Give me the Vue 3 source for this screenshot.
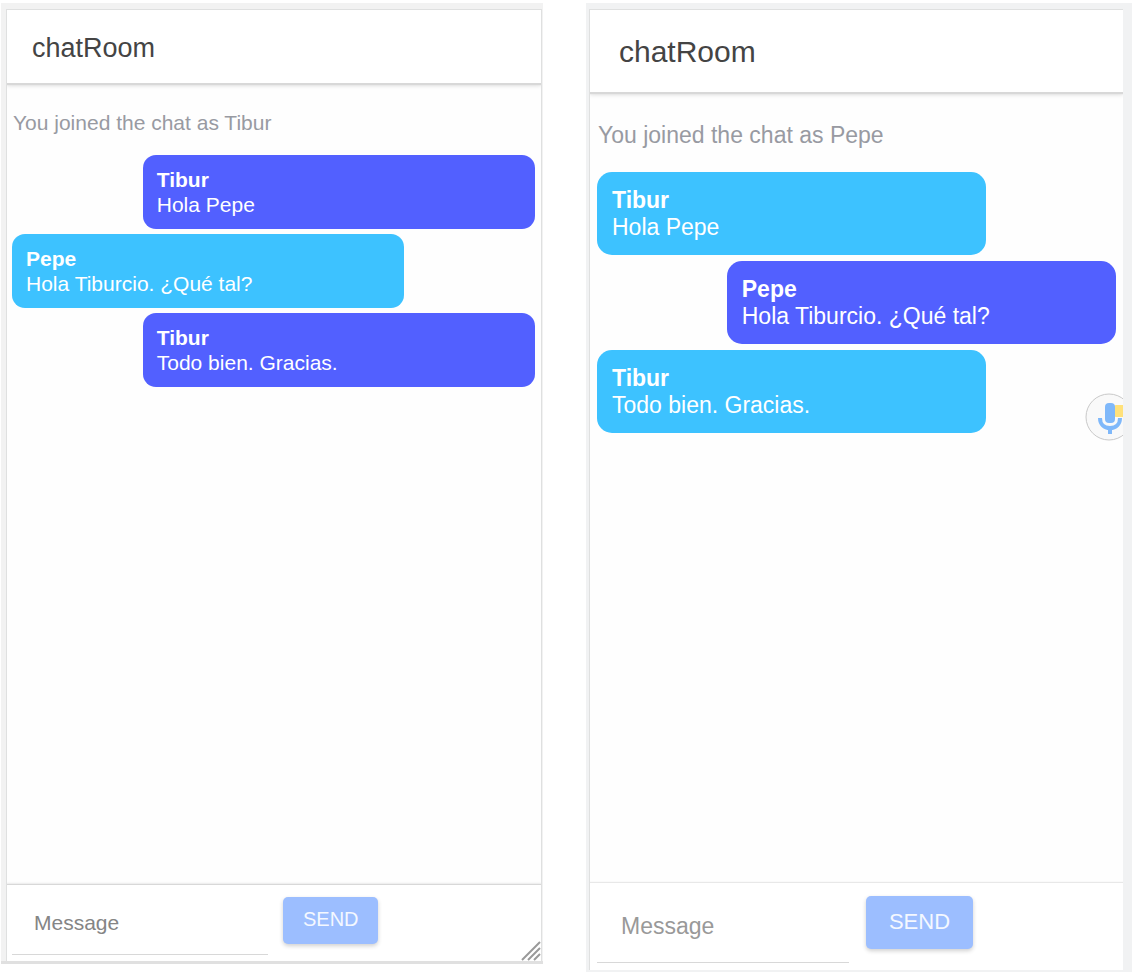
<script setup>
import { ref } from 'vue'

const messages = [
  { from: 'Tibur', text: 'Hola Pepe' },
  { from: 'Pepe', text: 'Hola Tiburcio. ¿Qué tal?' },
  { from: 'Tibur', text: 'Todo bien. Gracias.' },
]

const rooms = [
  { id: 'browser', user: 'Tibur' },
  { id: 'device', user: 'Pepe' },
]

const drafts = ref({ browser: '', device: '' })
</script>

<template>
  <main class="page">
    <section v-for="room in rooms" :key="room.id" class="phone" :class="room.id">
      <div class="screen">
        <header class="bar">
          <h1>chatRoom</h1>
        </header>

        <div class="log">
          <p class="joined">You joined the chat as {{ room.user }}</p>
          <article
            v-for="(message, i) in messages"
            :key="i"
            class="bubble"
            :class="{ mine: message.from === room.user }"
          >
            <strong>{{ message.from }}</strong>
            <span>{{ message.text }}</span>
          </article>
        </div>

        <form class="composer" @submit.prevent>
          <input
            v-model="drafts[room.id]"
            type="text"
            placeholder="Message"
            aria-label="Message"
          />
          <button type="submit" :disabled="!drafts[room.id]">SEND</button>
        </form>

        <svg v-if="room.id === 'browser'" class="grip" viewBox="0 0 20 20" aria-hidden="true">
          <path d="M1 19 19 1M7 19 19 7M13 19 19 13" fill="none" stroke="#9a9a9a" stroke-width="2" />
        </svg>
        <button v-else type="button" class="mic" aria-label="Voice input">
          <svg viewBox="0 0 48 48" aria-hidden="true">
            <circle cx="24" cy="24" r="23" fill="#f9f9f9" stroke="#c9c9c9" stroke-width="1" />
            <rect x="29" y="12" width="14" height="12" rx="2" fill="#ffe17a" />
            <rect x="20" y="10" width="10" height="20" rx="4" fill="#7fb8fa" />
            <path d="M15 25c0 6 4 10 10 10s10-4 10-10M25 35V41" fill="none" stroke="#7fb8fa" stroke-width="4" />
          </svg>
        </button>
      </div>
    </section>
  </main>
</template>

<style>
body {
  margin: 0;
  background: #fff;
}
</style>

<style scoped>
.page {
  box-sizing: border-box;
  min-height: 100vh;
  padding: 3px 7px 7px 1px;
  display: grid;
  grid-template-columns: 542fr 546fr;
  gap: 43px;
  font-family: "Liberation Sans", Arial, sans-serif;
}

.phone {
  display: flex;
  box-sizing: border-box;
}

.browser {
  --title: 27px;
  --text: 21px;
  --line: 25px;
  --label: 20px;
  --bar: 73px;
  --bar-pad: 3px 25px 0;
  --joined: 24px;
  --joined-pad: 28px 1px 15px;
  --pad: 12px 14px;
  --radius: 13px;
  --gap: 5px;
  --side: 0 6px 0 5px;
  --foot: 76px;
  --foot-pad: 12px 6px 6px 5px;
  --foot-gap: 15px;
  --field: 49%;
  --button: 95px;
  --button-height: 47px;
  --indent: 22px;
  --hint: #858585;
  margin-bottom: 8px;
  padding: 6px 1px 3px 5px;
  background: linear-gradient(#e0e0e0, #e0e0e0) bottom / 100% 3px no-repeat, #f2f2f2;
}

.device {
  --title: 30px;
  --text: 23px;
  --line: 27px;
  --label: 22px;
  --bar: 82px;
  --bar-pad: 2px 29px 0;
  --joined: 26px;
  --joined-pad: 30px 1px 18px;
  --pad: 15px 15px 14px;
  --radius: 15px;
  --gap: 6px;
  --side: 0 7px;
  --foot: 87px;
  --foot-pad: 13px 7px 7px;
  --foot-gap: 17px;
  --field: 49%;
  --button: 107px;
  --button-height: 53px;
  --indent: 24px;
  --hint: #999;
  padding: 6px 9px 2px 3px;
  background: #f1f2f3;
}

.screen {
  position: relative;
  flex: 1;
  display: flex;
  flex-direction: column;
  overflow: hidden;
  border: 1px solid #dfe0e0;
  border-bottom: 0;
  background: #fefefe;
}

.device .screen {
  border-right: 0;
}

.bar {
  box-sizing: border-box;
  display: flex;
  align-items: center;
  height: var(--bar);
  padding: var(--bar-pad);
  background: #fff;
  box-shadow: 0 2px 1px #d8d8d8, 0 3px 4px #e0e0e0;
}

h1 {
  margin: 0;
  font-size: var(--title);
  font-weight: 400;
  color: #444;
}

.log {
  flex: 1;
  display: flex;
  flex-direction: column;
  gap: var(--gap);
  padding: var(--side);
}

.joined {
  margin: 0;
  padding: var(--joined-pad);
  font-size: var(--text);
  line-height: var(--joined);
  color: #989aa2;
}

.bubble {
  box-sizing: border-box;
  width: 75%;
  padding: var(--pad);
  border-radius: var(--radius);
  background: #3dc2ff;
  color: #fff;
  font-size: var(--text);
  line-height: var(--line);
}

.bubble.mine {
  align-self: flex-end;
  background: #5260ff;
}

.bubble strong,
.bubble span {
  display: block;
}

.composer {
  box-sizing: border-box;
  display: flex;
  align-items: flex-start;
  gap: var(--foot-gap);
  height: var(--foot);
  padding: var(--foot-pad);
  background: #fff;
  box-shadow: 0 -1px 1px #d8d8d8, 0 -2px 2px #eee;
}

.device .composer {
  box-shadow: 0 -1px 1px #e8e8e8;
}

input {
  box-sizing: border-box;
  width: var(--field);
  height: 100%;
  padding: 0 0 5px var(--indent);
  border: 0;
  border-bottom: 1px solid #d8d8d8;
  border-radius: 0;
  outline: 0;
  background: transparent;
  font: var(--text) "Liberation Sans", Arial, sans-serif;
  color: #444;
}

.device input {
  width: 252px;
  padding-bottom: 6px;
}

input::placeholder {
  color: var(--hint);
  opacity: 1;
}

.composer button {
  width: var(--button);
  height: var(--button-height);
  padding: 0 0 2px;
  border: 0;
  border-radius: 5px;
  background: #9cbeff;
  box-shadow: 0 2px 4px #d0d0d0;
  color: #f4f8ff;
  font: var(--label) "Liberation Sans", Arial, sans-serif;
}

.grip {
  position: absolute;
  right: 0;
  bottom: 0;
  width: 20px;
  height: 20px;
}

.mic {
  position: absolute;
  top: 383px;
  right: -10px;
  width: 48px;
  height: 48px;
  padding: 0;
  border: 0;
  background: none;
}

.mic svg {
  display: block;
}
</style>
